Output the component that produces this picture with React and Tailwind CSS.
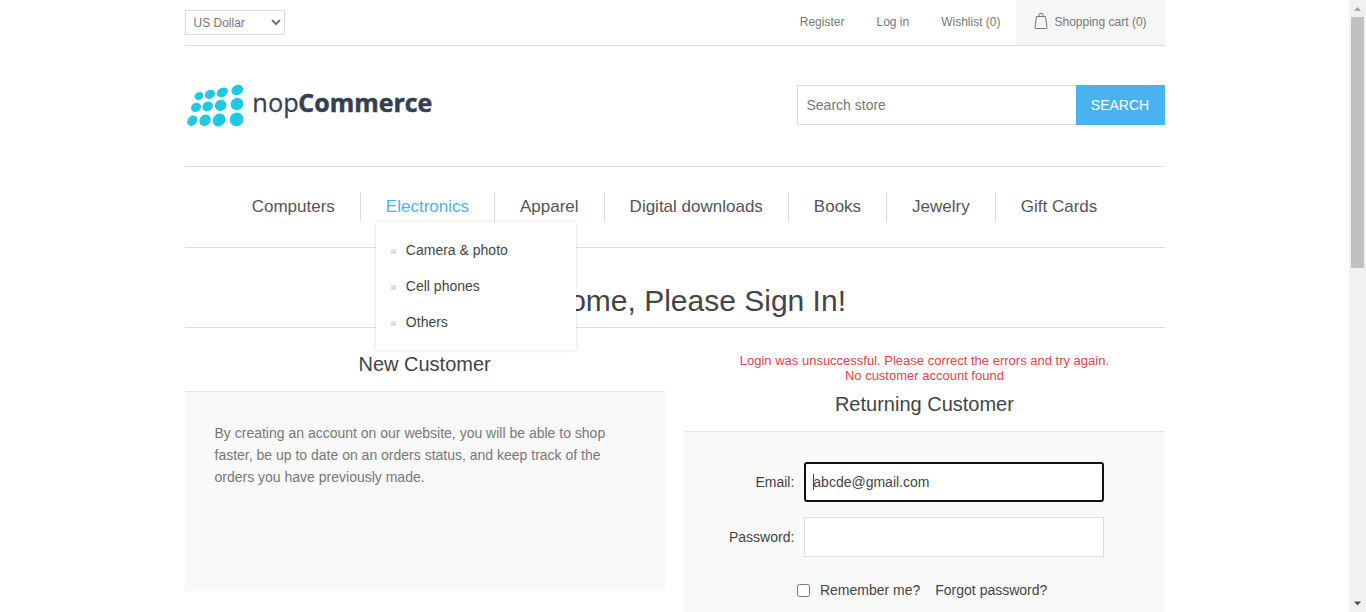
const menu = ["Computers", "Electronics", "Apparel", "Digital downloads", "Books", "Jewelry", "Gift Cards"];
const electronics = ["Camera & photo", "Cell phones", "Others"];

const dots = [
  [57, 63, 14, 11.5], [90, 58, 16, 13], [127, 52, 18, 13.5], [172, 45, 18.5, 15],
  [48, 97, 15.5, 13.5], [83, 94, 16.5, 14], [122, 91, 18, 16.5], [171, 87, 19.5, 18],
  [37, 137, 17, 13.5], [75, 136, 18.5, 16], [117, 135, 20.5, 18], [170, 133, 21, 20.5],
];

function Logo() {
  return (
    <svg className="block h-[60px] w-[260px] -ml-[4.5px] overflow-visible" viewBox="0 0 780 180">
      <g fill="#1fc8e3">
        {dots.map(([x, y, rx, ry], i) => (
          <ellipse key={`${x}-${y}`} cx={x} cy={y} rx={rx} ry={ry} transform={`rotate(${i > 7 ? -50 : -30} ${x} ${y})`} />
        ))}
      </g>
      <g fill="#343f50" stroke="#343f50" fontFamily="'Open Sans', 'Noto Sans', sans-serif">
        <text x="217" y="111" fontSize="77" strokeWidth="0.8" textLength="139" lengthAdjust="spacingAndGlyphs">nop</text>
        <text x="355" y="111" fontSize="77" strokeWidth="1.5" fontWeight="700" textLength="402" lengthAdjust="spacingAndGlyphs">Commerce</text>
      </g>
    </svg>
  );
}

function Header() {
  return (
    <header>
      <div className="flex h-[46px] items-start justify-between border-b border-[#ddd] text-[12px] text-[#777]">
        <select className="mt-[10px] h-[25px] w-[100px] border border-[#ddd] bg-white px-1 text-[12px] text-[#777]">
          <option>US Dollar</option>
        </select>
        <div className="flex h-[45px] leading-[45px]">
          <a className="mr-8">Register</a>
          <a className="mr-8">Log in</a>
          <a className="mr-[15px]">Wishlist (0)</a>
          <a className="flex h-[45px] w-[149px] bg-[#f6f6f6] pl-[18px]">
            <svg className="mt-3 mr-[6px] h-[18px] w-[15px]" viewBox="0 0 15 18" fill="none" stroke="#777" strokeWidth="1">
              <path d="M2.500 4.500h9l1.500 11q0 1-1 1H2q-1 0-1-1z" />
              <path d="M5 4.500V2.500q0-1 1-1h2q1 0 1 1v2" />
            </svg>
            Shopping cart (0)
          </a>
        </div>
      </div>
      <div className="flex h-[120px] items-start justify-between">
        <div className="pt-[29px]"><Logo /></div>
        <form className="mt-[39px] flex h-10">
          <input placeholder="Search store" className="h-10 w-[279px] border border-r-0 border-[#ddd] px-[9px] text-[14px] text-[#777] placeholder:text-[#777]" />
          <button type="button" className="h-10 w-[89px] bg-[#4ab2f1] text-[14px] text-white">SEARCH</button>
        </form>
      </div>
    </header>
  );
}

function Menu() {
  return (
    <nav className="flex h-[82px] justify-center border-y border-[#ddd] pt-[25px] text-[17px] text-[#555]">
      {menu.map((name, i) => (
        <div key={name} className={i === 0 ? "relative h-[30px] px-[25px] leading-[29px]" : "relative h-[30px] border-l border-[#ddd] px-[25px] leading-[29px]"}>
          <a className={name === "Electronics" ? "text-[#4ab2f1]" : ""}>{name}</a>
          {name === "Electronics" && (
            <ul className="absolute top-[30px] left-[15px] z-10 h-[128px] w-[200px] bg-white pt-[10px] text-[14px] text-[#444] shadow-[0_0_3px_rgba(0,0,0,0.15)]">
              {electronics.map((item) => (
                <li key={item} className="flex h-9 items-center pl-[15px] leading-9">
                  <span className="mt-0.5 mr-[10px] size-[5px] bg-[#ddd]" />
                  {item}
                </li>
              ))}
            </ul>
          )}
        </div>
      ))}
    </nav>
  );
}

function Login() {
  return (
    <main className="text-[#444]">
      <h1 className="h-[80px] border-b border-[#ddd] pt-[35px] text-center text-[30px] leading-[36px]">Welcome, Please Sign In!</h1>
      <div className="flex items-start justify-between">
        <section className="w-[49%]">
          <h2 className="h-[63px] pt-[24px] text-center text-[20px] leading-6">New Customer</h2>
          <div className="h-[200px] border-t border-[#e4e4e4] bg-[#f9f9f9] px-[30px] pt-[30px] text-[14px] leading-[22px] text-[#777]">
            By creating an account on our website, you will be able to shop faster, be up to date on an orders status, and keep track of the orders you have previously made.
          </div>
        </section>
        <section className="w-[49%]">
          <div className="pt-[25px] text-center text-[13px] leading-[15px] text-[#e4434b]">
            Login was unsuccessful. Please correct the errors and try again.
            <br />
            No customer account found
          </div>
          <h2 className="h-[48px] pt-[9px] text-center text-[20px] leading-6">Returning Customer</h2>
          <form className="h-[240px] border-t border-[#e4e4e4] bg-[#f9f9f9] pt-[30px] text-[14px]">
            <div className="flex h-10 items-center">
              <label className="w-[110px] text-right">Email:</label>
              <div className="ml-[10px] flex h-10 w-[300px] items-center rounded-[3px] border-2 border-[#101010] bg-white pl-[7px]">
                <span className="h-4 w-px bg-[#444]" />
                <span className="-ml-px">abcde@gmail.com</span>
              </div>
            </div>
            <div className="mt-[15px] flex h-10 items-center">
              <label className="w-[110px] text-right">Password:</label>
              <input type="password" className="ml-[10px] h-10 w-[300px] border border-[#ddd] bg-white px-2" />
            </div>
            <div className="mt-[23px] flex h-5 items-center pl-[112.600px]">
              <input type="checkbox" className="mr-[10px] size-[13px]" />
              <label>Remember me?</label>
              <a className="ml-[15px]">Forgot password?</a>
            </div>
          </form>
        </section>
      </div>
    </main>
  );
}

function Scrollbar() {
  return (
    <div className="flex h-full w-[17px] flex-col items-center bg-[#f1f1f1]">
      <svg className="h-[17px] w-[17px] shrink-0" viewBox="0 0 17 17"><path d="M8.500 7L12 11H5z" fill="#a3a3a3" /></svg>
      <div className="h-[251px] w-[13px] bg-[#c1c1c1]" />
      <div className="flex-1" />
      <svg className="h-[17px] w-[17px] shrink-0" viewBox="0 0 17 17"><path d="M8.500 10.500L5 6.500h7z" fill="#505050" /></svg>
    </div>
  );
}

export default function App() {
  return (
    <div className="flex h-[612px] w-[1366px] overflow-hidden bg-white font-['Liberation_Sans',Arial,sans-serif]">
      <div className="h-full w-[1349px] overflow-hidden">
        <div className="mx-auto w-[980px]">
          <Header />
          <Menu />
          <Login />
        </div>
      </div>
      <Scrollbar />
    </div>
  );
}
